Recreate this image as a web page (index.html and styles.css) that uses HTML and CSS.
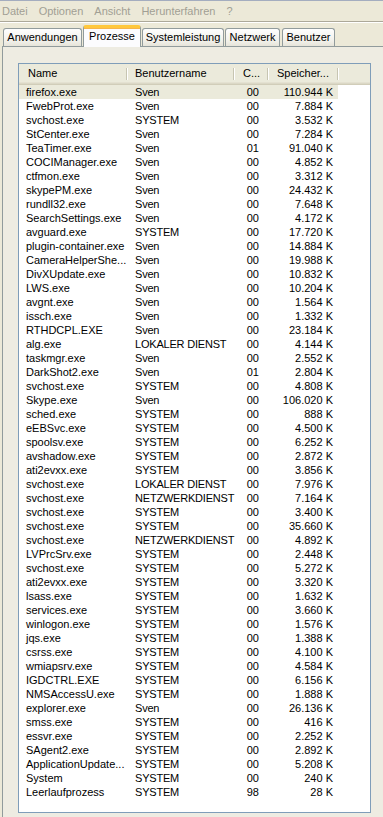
FILE: index.html
```html
<!DOCTYPE html>
<html lang="de">
<head>
  <meta charset="UTF-8">
  <meta name="viewport" content="width=device-width, initial-scale=1.0">
  <title>Windows Task-Manager</title>
  <link rel="stylesheet" href="styles.css">
</head>
<body>
  <div class="menubar">
    <span class="menu-item">Datei</span>
    <span class="menu-item">Optionen</span>
    <span class="menu-item">Ansicht</span>
    <span class="menu-item">Herunterfahren</span>
    <span class="menu-item">?</span>
  </div>

  <div class="tabs">
    <div class="tab tab-apps">Anwendungen</div>
    <div class="tab tab-active">Prozesse</div>
    <div class="tab tab-perf">Systemleistung</div>
    <div class="tab tab-net">Netzwerk</div>
    <div class="tab tab-users">Benutzer</div>
  </div>

  <div class="panel">
    <div class="listview">
      <div class="lv-header">
        <div class="hcell col-name">Name</div>
        <div class="hcell col-user">Benutzername</div>
        <div class="hcell col-cpu">C...</div>
        <div class="hcell col-mem">Speicher...</div>
      </div>
      <div class="lv-body">
        <div class="row selected"><span class="c-name">firefox.exe</span><span class="c-user">Sven</span><span class="c-cpu">00</span><span class="c-mem">110.944 K</span></div>
        <div class="row"><span class="c-name">FwebProt.exe</span><span class="c-user">Sven</span><span class="c-cpu">00</span><span class="c-mem">7.884 K</span></div>
        <div class="row"><span class="c-name">svchost.exe</span><span class="c-user">SYSTEM</span><span class="c-cpu">00</span><span class="c-mem">3.532 K</span></div>
        <div class="row"><span class="c-name">StCenter.exe</span><span class="c-user">Sven</span><span class="c-cpu">00</span><span class="c-mem">7.284 K</span></div>
        <div class="row"><span class="c-name">TeaTimer.exe</span><span class="c-user">Sven</span><span class="c-cpu">01</span><span class="c-mem">91.040 K</span></div>
        <div class="row"><span class="c-name">COCIManager.exe</span><span class="c-user">Sven</span><span class="c-cpu">00</span><span class="c-mem">4.852 K</span></div>
        <div class="row"><span class="c-name">ctfmon.exe</span><span class="c-user">Sven</span><span class="c-cpu">00</span><span class="c-mem">3.312 K</span></div>
        <div class="row"><span class="c-name">skypePM.exe</span><span class="c-user">Sven</span><span class="c-cpu">00</span><span class="c-mem">24.432 K</span></div>
        <div class="row"><span class="c-name">rundll32.exe</span><span class="c-user">Sven</span><span class="c-cpu">00</span><span class="c-mem">7.648 K</span></div>
        <div class="row"><span class="c-name">SearchSettings.exe</span><span class="c-user">Sven</span><span class="c-cpu">00</span><span class="c-mem">4.172 K</span></div>
        <div class="row"><span class="c-name">avguard.exe</span><span class="c-user">SYSTEM</span><span class="c-cpu">00</span><span class="c-mem">17.720 K</span></div>
        <div class="row"><span class="c-name">plugin-container.exe</span><span class="c-user">Sven</span><span class="c-cpu">00</span><span class="c-mem">14.884 K</span></div>
        <div class="row"><span class="c-name">CameraHelperShe...</span><span class="c-user">Sven</span><span class="c-cpu">00</span><span class="c-mem">19.988 K</span></div>
        <div class="row"><span class="c-name">DivXUpdate.exe</span><span class="c-user">Sven</span><span class="c-cpu">00</span><span class="c-mem">10.832 K</span></div>
        <div class="row"><span class="c-name">LWS.exe</span><span class="c-user">Sven</span><span class="c-cpu">00</span><span class="c-mem">10.204 K</span></div>
        <div class="row"><span class="c-name">avgnt.exe</span><span class="c-user">Sven</span><span class="c-cpu">00</span><span class="c-mem">1.564 K</span></div>
        <div class="row"><span class="c-name">issch.exe</span><span class="c-user">Sven</span><span class="c-cpu">00</span><span class="c-mem">1.332 K</span></div>
        <div class="row"><span class="c-name">RTHDCPL.EXE</span><span class="c-user">Sven</span><span class="c-cpu">00</span><span class="c-mem">23.184 K</span></div>
        <div class="row"><span class="c-name">alg.exe</span><span class="c-user">LOKALER DIENST</span><span class="c-cpu">00</span><span class="c-mem">4.144 K</span></div>
        <div class="row"><span class="c-name">taskmgr.exe</span><span class="c-user">Sven</span><span class="c-cpu">00</span><span class="c-mem">2.552 K</span></div>
        <div class="row"><span class="c-name">DarkShot2.exe</span><span class="c-user">Sven</span><span class="c-cpu">01</span><span class="c-mem">2.804 K</span></div>
        <div class="row"><span class="c-name">svchost.exe</span><span class="c-user">SYSTEM</span><span class="c-cpu">00</span><span class="c-mem">4.808 K</span></div>
        <div class="row"><span class="c-name">Skype.exe</span><span class="c-user">Sven</span><span class="c-cpu">00</span><span class="c-mem">106.020 K</span></div>
        <div class="row"><span class="c-name">sched.exe</span><span class="c-user">SYSTEM</span><span class="c-cpu">00</span><span class="c-mem">888 K</span></div>
        <div class="row"><span class="c-name">eEBSvc.exe</span><span class="c-user">SYSTEM</span><span class="c-cpu">00</span><span class="c-mem">4.500 K</span></div>
        <div class="row"><span class="c-name">spoolsv.exe</span><span class="c-user">SYSTEM</span><span class="c-cpu">00</span><span class="c-mem">6.252 K</span></div>
        <div class="row"><span class="c-name">avshadow.exe</span><span class="c-user">SYSTEM</span><span class="c-cpu">00</span><span class="c-mem">2.872 K</span></div>
        <div class="row"><span class="c-name">ati2evxx.exe</span><span class="c-user">SYSTEM</span><span class="c-cpu">00</span><span class="c-mem">3.856 K</span></div>
        <div class="row"><span class="c-name">svchost.exe</span><span class="c-user">LOKALER DIENST</span><span class="c-cpu">00</span><span class="c-mem">7.976 K</span></div>
        <div class="row"><span class="c-name">svchost.exe</span><span class="c-user">NETZWERKDIENST</span><span class="c-cpu">00</span><span class="c-mem">7.164 K</span></div>
        <div class="row"><span class="c-name">svchost.exe</span><span class="c-user">SYSTEM</span><span class="c-cpu">00</span><span class="c-mem">3.400 K</span></div>
        <div class="row"><span class="c-name">svchost.exe</span><span class="c-user">SYSTEM</span><span class="c-cpu">00</span><span class="c-mem">35.660 K</span></div>
        <div class="row"><span class="c-name">svchost.exe</span><span class="c-user">NETZWERKDIENST</span><span class="c-cpu">00</span><span class="c-mem">4.892 K</span></div>
        <div class="row"><span class="c-name">LVPrcSrv.exe</span><span class="c-user">SYSTEM</span><span class="c-cpu">00</span><span class="c-mem">2.448 K</span></div>
        <div class="row"><span class="c-name">svchost.exe</span><span class="c-user">SYSTEM</span><span class="c-cpu">00</span><span class="c-mem">5.272 K</span></div>
        <div class="row"><span class="c-name">ati2evxx.exe</span><span class="c-user">SYSTEM</span><span class="c-cpu">00</span><span class="c-mem">3.320 K</span></div>
        <div class="row"><span class="c-name">lsass.exe</span><span class="c-user">SYSTEM</span><span class="c-cpu">00</span><span class="c-mem">1.632 K</span></div>
        <div class="row"><span class="c-name">services.exe</span><span class="c-user">SYSTEM</span><span class="c-cpu">00</span><span class="c-mem">3.660 K</span></div>
        <div class="row"><span class="c-name">winlogon.exe</span><span class="c-user">SYSTEM</span><span class="c-cpu">00</span><span class="c-mem">1.576 K</span></div>
        <div class="row"><span class="c-name">jqs.exe</span><span class="c-user">SYSTEM</span><span class="c-cpu">00</span><span class="c-mem">1.388 K</span></div>
        <div class="row"><span class="c-name">csrss.exe</span><span class="c-user">SYSTEM</span><span class="c-cpu">00</span><span class="c-mem">4.100 K</span></div>
        <div class="row"><span class="c-name">wmiapsrv.exe</span><span class="c-user">SYSTEM</span><span class="c-cpu">00</span><span class="c-mem">4.584 K</span></div>
        <div class="row"><span class="c-name">IGDCTRL.EXE</span><span class="c-user">SYSTEM</span><span class="c-cpu">00</span><span class="c-mem">6.156 K</span></div>
        <div class="row"><span class="c-name">NMSAccessU.exe</span><span class="c-user">SYSTEM</span><span class="c-cpu">00</span><span class="c-mem">1.888 K</span></div>
        <div class="row"><span class="c-name">explorer.exe</span><span class="c-user">Sven</span><span class="c-cpu">00</span><span class="c-mem">26.136 K</span></div>
        <div class="row"><span class="c-name">smss.exe</span><span class="c-user">SYSTEM</span><span class="c-cpu">00</span><span class="c-mem">416 K</span></div>
        <div class="row"><span class="c-name">essvr.exe</span><span class="c-user">SYSTEM</span><span class="c-cpu">00</span><span class="c-mem">2.252 K</span></div>
        <div class="row"><span class="c-name">SAgent2.exe</span><span class="c-user">SYSTEM</span><span class="c-cpu">00</span><span class="c-mem">2.892 K</span></div>
        <div class="row"><span class="c-name">ApplicationUpdate...</span><span class="c-user">SYSTEM</span><span class="c-cpu">00</span><span class="c-mem">5.208 K</span></div>
        <div class="row"><span class="c-name">System</span><span class="c-user">SYSTEM</span><span class="c-cpu">00</span><span class="c-mem">240 K</span></div>
        <div class="row"><span class="c-name">Leerlaufprozess</span><span class="c-user">SYSTEM</span><span class="c-cpu">98</span><span class="c-mem">28 K</span></div>
      </div>
    </div>
  </div>
</body>
</html>
```

FILE: styles.css
```css
:root {
  --face: #ece9d8;
  --tab-border: #919b9c;
  --lv-border: #7f9db9;
  --header-bg: #ebeadb;
  --muted-text: #a19f94;
}

* {
  margin: 0;
  padding: 0;
  box-sizing: border-box;
}

body {
  font-family: "Liberation Sans", Arial, sans-serif;
  font-size: 11px;
  color: #000;
  background-color: var(--face);
  height: 817px;
  overflow: hidden;
}

/* Menüleiste */
.menubar {
  height: 22px;
  display: flex;
  align-items: center;
  border-top: 1px solid #a4adbf;
  border-bottom: 1px solid #aca899;
  box-shadow: 0 1px 0 #fff;
  padding-left: 2px;
  padding-bottom: 1px;
}

.menu-item {
  color: var(--muted-text);
  margin-right: 11px;
  white-space: nowrap;
}

/* Registerkarten */
.tabs {
  display: flex;
  align-items: flex-end;
  height: 24px;
  padding-left: 3px;
  position: relative;
  z-index: 1;
}

.tab {
  height: 18px;
  line-height: 17px;
  text-align: center;
  white-space: nowrap;
  border: 1px solid var(--tab-border);
  border-bottom: none;
  border-radius: 3px 3px 0 0;
  background: linear-gradient(#fefefe, #f1f0ea 70%, #e6e4d9);
  margin-right: 1px;
}

.tab-apps { width: 79px; }
.tab-perf { width: 82px; }
.tab-net { width: 55px; margin-right: 2px; }
.tab-users { width: 53px; }

.tab-active {
  width: 58px;
  height: 22px;
  line-height: 17px;
  margin-bottom: -1px;
  background: #fcfcfe;
  border-top: 3px solid #ffc83c;
  box-shadow: inset 0 1px 0 #f7b54a;
  border-radius: 3px 3px 0 0;
}

/* Inhalt: die rechte Kante der Karte liegt ausserhalb des Fensters */
.panel {
  margin-left: 2px;
  height: 780px;
  border: 1px solid var(--tab-border);
  border-right: none;
  background-color: #eeece2;
  padding: 16px 0 0 15px;
}

.listview {
  width: 353px;
  height: 750px;
  border: 1px solid var(--lv-border);
  background-color: #fff;
  overflow: hidden;
}

.lv-header {
  height: 21px;
  display: flex;
  background-color: var(--header-bg);
  box-shadow: inset 0 -1px 0 #d1cdb9, inset 0 -2px 0 #dbd8c6, inset 0 -3px 0 #e4e1d1;
}

.hcell {
  position: relative;
  line-height: 19px;
  padding-left: 9px;
  white-space: nowrap;
}

.hcell::after {
  content: '';
  position: absolute;
  right: 0;
  top: 4px;
  bottom: 5px;
  width: 1px;
  background-color: #c7c5b2;
  box-shadow: 1px 0 0 #fff;
}

.col-name { width: 108px; }
.col-user { width: 107px; padding-left: 8px; }
.col-cpu { width: 34px; }
.col-mem { width: 70px; }

.row {
  display: flex;
  width: 319px;
  height: 14px;
  line-height: 14px;
  white-space: nowrap;
}

.row.selected {
  background-color: #ebeadb;
}

.row span {
  flex-shrink: 0;
}

.c-name { width: 108px; padding-left: 7px; overflow: hidden; }
.c-user { width: 107px; padding-left: 8px; letter-spacing: -0.2px; }
.c-cpu { width: 34px; padding-right: 9px; text-align: right; }
.c-mem { width: 70px; padding-right: 5px; text-align: right; }
```
